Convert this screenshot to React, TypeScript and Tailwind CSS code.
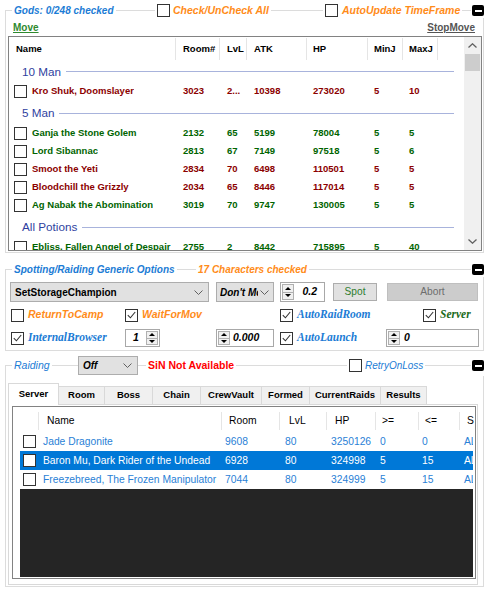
import React from 'react'

type Boss = {
  name: string
  room: string
  lvl: string
  atk: string
  hp: string
  minj: string
  maxj: string
  red?: boolean
}

const gods: { title: string; rows: Boss[] }[] = [
  {
    title: '10 Man',
    rows: [{ name: 'Kro Shuk, Doomslayer', room: '3023', lvl: '2...', atk: '10398', hp: '273020', minj: '5', maxj: '10', red: true }],
  },
  {
    title: '5 Man',
    rows: [
      { name: 'Ganja the Stone Golem', room: '2132', lvl: '65', atk: '5199', hp: '78004', minj: '5', maxj: '5' },
      { name: 'Lord Sibannac', room: '2813', lvl: '67', atk: '7149', hp: '97518', minj: '5', maxj: '6' },
      { name: 'Smoot the Yeti', room: '2834', lvl: '70', atk: '6498', hp: '110501', minj: '5', maxj: '5', red: true },
      { name: 'Bloodchill the Grizzly', room: '2034', lvl: '65', atk: '8446', hp: '117014', minj: '5', maxj: '5', red: true },
      { name: 'Ag Nabak the Abomination', room: '3019', lvl: '70', atk: '9747', hp: '130005', minj: '5', maxj: '5' },
    ],
  },
  {
    title: 'All Potions',
    rows: [{ name: 'Ebliss, Fallen Angel of Despair', room: '2755', lvl: '2', atk: '8442', hp: '715895', minj: '5', maxj: '40' }],
  },
]

const raids = [
  { name: 'Jade Dragonite', room: '9608', lvl: '80', hp: '3250126', ge: '0', le: '0', s: 'AL' },
  { name: 'Baron Mu, Dark Rider of the Undead', room: '6928', lvl: '80', hp: '324998', ge: '5', le: '15', s: 'AL', selected: true },
  { name: 'Freezebreed, The Frozen Manipulator', room: '7044', lvl: '80', hp: '324999', ge: '5', le: '15', s: 'AL' },
]

const tabs = ['Server', 'Room', 'Boss', 'Chain', 'CrewVault', 'Formed', 'CurrentRaids', 'Results']
const tabWidths: Record<string, string> = {
  Server: 'w-[51px]',
  Room: 'w-[47px]',
  Boss: 'w-[49px]',
  Chain: 'w-[49px]',
  CrewVault: 'w-[62px]',
  Formed: 'w-[49px]',
  CurrentRaids: 'w-[72px]',
  Results: 'w-[47px]',
}

function Box({ checked = false }: { checked?: boolean }) {
  return (
    <span className="w-[13px] h-[13px] shrink-0 border border-[#333333] bg-white flex items-center justify-center">
      {checked && (
        <svg width="9" height="8" viewBox="0 0 9 8">
          <path d="M0.8 4.2 L3.4 6.8 L8.2 1" fill="none" stroke="#333333" strokeWidth="1.1" />
        </svg>
      )}
    </span>
  )
}

function Minus() {
  return (
    <span className="w-[12px] h-[11px] bg-black rounded-[2px] flex items-center justify-center">
      <span className="w-[7px] h-[2px] bg-white" />
    </span>
  )
}

function Chevron() {
  return (
    <svg width="9" height="5" viewBox="0 0 9 5" className="shrink-0">
      <path d="M0.5 0.5 L4.5 4.5 L8.5 0.5" fill="none" stroke="#606060" strokeWidth="1" />
    </svg>
  )
}

function Spin() {
  return (
    <span className="w-[12px] shrink-0 flex flex-col border border-[#b0b0b0] bg-[#f0f0f0] m-[1px]">
      <span className="flex-1 flex items-center justify-center border-b border-[#b0b0b0]">
        <svg width="6" height="3" viewBox="0 0 6 3">
          <path d="M0 3 L3 0 L6 3 Z" fill="#000" />
        </svg>
      </span>
      <span className="flex-1 flex items-center justify-center">
        <svg width="6" height="3" viewBox="0 0 6 3">
          <path d="M0 0 L3 3 L6 0 Z" fill="#000" />
        </svg>
      </span>
    </span>
  )
}

function Num({ value, spinLeft = false, className = '', textClass = '' }: { value: string; spinLeft?: boolean; className?: string; textClass?: string }) {
  return (
    <div className={`flex items-stretch border border-[#a8a8a8] bg-white ${className}`}>
      {spinLeft && <Spin />}
      <span className={`flex-1 flex items-center text-[10.5px] font-bold italic ${textClass}`}>{value}</span>
      {!spinLeft && <Spin />}
    </div>
  )
}

function ScrollArrow({ up }: { up?: boolean }) {
  return (
    <div className="h-[17px] flex items-center justify-center">
      <svg width="9" height="5" viewBox="0 0 9 5">
        <path d={up ? 'M0.5 4.5 L4.5 0.8 L8.5 4.5' : 'M0.5 0.5 L4.5 4.2 L8.5 0.5'} fill="none" stroke="#606060" strokeWidth="1.3" />
      </svg>
    </div>
  )
}

export default function App() {
  return (
    <div className="w-[487px] h-[592px] bg-white overflow-hidden font-['Liberation_Sans',Arial,sans-serif] text-black">
      {/* Gods list */}
      <div className="relative mt-[10px] ml-[5px] w-[479px] h-[243px] border border-[#dcdcdc]">
        <div className="absolute left-0 right-0 -top-[8px] h-[15px]">
          <span className="absolute left-[6px] top-0 h-full px-[2px] bg-white flex items-center text-[10px] font-bold italic text-[#1c7cd5]">
            Gods: 0/248 checked
          </span>
          <span className="absolute left-[149px] top-0 h-full px-[2px] bg-white flex items-center gap-[3px]">
            <Box />
            <span className="text-[10.5px] font-bold italic text-[#ff8c1a]">Check/UnCheck All</span>
          </span>
          <span className="absolute left-[317px] top-0 h-full px-[2px] bg-white flex items-center gap-[4px]">
            <Box />
            <span className="text-[10.5px] font-bold italic text-[#ff8c1a]">AutoUpdate TimeFrame</span>
          </span>
          <span className="absolute left-[465px] top-0 h-full pl-[1px] bg-white flex items-center">
            <Minus />
          </span>
        </div>

        <div className="h-[25px] flex justify-between pt-[11px] pl-[7px] pr-[8px] text-[10px] font-bold leading-[12px]">
          <span className="text-[#2f8a2f] underline">Move</span>
          <span className="text-[#555555] underline">StopMove</span>
        </div>

        <div className="ml-[2px] w-[474px] h-[215px] border border-[#828282] flex overflow-hidden">
          <div className="w-[455px] flex flex-col overflow-hidden">
            <div className="h-[24px] shrink-0 flex items-center text-[9.5px] font-bold">
              <span className="w-[167px] h-[22px] flex items-center pl-[7px] border-r border-[#e5e5e5]">Name</span>
              <span className="w-[44px] h-[22px] flex items-center pl-[7px] border-r border-[#e5e5e5]">Room#</span>
              <span className="w-[27px] h-[22px] flex items-center pl-[7px] border-r border-[#e5e5e5]">LvL</span>
              <span className="w-[60px] h-[22px] flex items-center pl-[7px] border-r border-[#e5e5e5]">ATK</span>
              <span className="w-[61px] h-[22px] flex items-center pl-[6px] border-r border-[#e5e5e5]">HP</span>
              <span className="w-[35px] h-[22px] flex items-center pl-[6px] border-r border-[#e5e5e5]">MinJ</span>
              <span className="w-[35px] h-[22px] flex items-center pl-[6px] border-r border-[#e5e5e5]">MaxJ</span>
            </div>

            {gods.map((g, gi) => (
              <div key={g.title}>
                <div className={`${gi === 0 ? 'h-[21px]' : 'h-[24px] pt-[2px]'} flex items-center pl-[13px] pr-[10px]`}>
                  <span className="text-[11.7px] text-[#2f3fa0]">{g.title}</span>
                  <span className="flex-1 ml-[5px] h-px bg-[#a8b3dc]" />
                </div>
                {g.rows.map((r) => (
                  <div
                    key={r.name}
                    className={`h-[18px] flex items-center text-[9.5px] font-bold ${r.red ? 'text-[#8b0000]' : 'text-[#006400]'}`}
                  >
                    <span className="w-[167px] flex items-center gap-[5px] pl-[5px]">
                      <Box />
                      <span className="truncate">{r.name}</span>
                    </span>
                    <span className="w-[44px] pl-[7px]">{r.room}</span>
                    <span className="w-[27px] pl-[7px]">{r.lvl}</span>
                    <span className="w-[60px] pl-[7px]">{r.atk}</span>
                    <span className="w-[61px] pl-[6px]">{r.hp}</span>
                    <span className="w-[35px] pl-[6px]">{r.minj}</span>
                    <span className="w-[35px] pl-[6px]">{r.maxj}</span>
                  </div>
                ))}
              </div>
            ))}
          </div>
          <div className="w-[17px] bg-[#f0f0f0] flex flex-col">
            <ScrollArrow up />
            <div className="h-[17px] mx-[1px] bg-[#cdcdcd]" />
            <div className="flex-1" />
            <ScrollArrow />
          </div>
        </div>
      </div>

      {/* Spotting / Raiding options */}
      <div className="relative mt-[16px] ml-[5px] w-[479px] h-[82px] border border-[#dcdcdc]">
        <div className="absolute left-0 right-0 -top-[8px] h-[15px]">
          <span className="absolute left-[6px] top-0 h-full px-[2px] bg-white flex items-center text-[10px] font-bold italic text-[#1c7cd5]">
            Spotting/Raiding Generic Options
          </span>
          <span className="absolute left-[190px] top-0 h-full px-[2px] bg-white flex items-center text-[10px] font-bold italic text-[#ff8c1a]">
            17 Characters checked
          </span>
          <span className="absolute left-[465px] top-0 h-full pl-[1px] bg-white flex items-center">
            <Minus />
          </span>
        </div>

        <div className="mt-[12px] h-[20px] flex items-stretch">
          <div className="ml-[4px] w-[199px] bg-[#e1e1e1] border border-[#adadad] flex items-center justify-between pl-[4px] pr-[5px]">
            <span className="text-[10px] font-bold">SetStorageChampion</span>
            <Chevron />
          </div>
          <div className="ml-[7px] w-[58px] bg-[#e1e1e1] border border-[#adadad] flex items-center pl-[3px] pr-[4px] gap-[2px]">
            <span className="flex-1 overflow-hidden whitespace-nowrap text-[10px] font-bold italic">Don't Move</span>
            <Chevron />
          </div>
          <Num value="0.2" spinLeft className="ml-[6px] w-[45px]" textClass="justify-end pr-[7px]" />
          <div className="ml-[8px] mt-[1px] w-[44px] h-[18px] bg-[#e1e1e1] border border-[#adadad] flex items-center justify-center text-[10.2px] text-[#2e7d2e]">
            Spot
          </div>
          <div className="ml-[10px] mt-[1px] w-[91px] h-[18px] bg-[#cccccc] border border-[#bfbfbf] flex items-center justify-center text-[10.2px] text-[#6d6d6d]">
            Abort
          </div>
        </div>

        <div className="mt-[3px] h-[20px] flex items-center">
          <span className="ml-[5px] w-[114px] flex items-center gap-[4px]">
            <Box />
            <span className="text-[10.5px] font-bold italic text-[#ff8c1a]">ReturnToCamp</span>
          </span>
          <span className="w-[155px] flex items-center gap-[4px]">
            <Box checked />
            <span className="text-[10.5px] font-bold italic text-[#ff8c1a]">WaitForMov</span>
          </span>
          <span className="w-[143px] flex items-center gap-[4px]">
            <Box checked />
            <span className="font-['Liberation_Serif',serif] text-[11.5px] font-bold italic text-[#1c7cd5]">AutoRaidRoom</span>
          </span>
          <span className="flex items-center gap-[4px]">
            <Box checked />
            <span className="font-['Liberation_Serif',serif] text-[11.5px] font-bold italic text-[#1a6a1a]">Server</span>
          </span>
        </div>

        <div className="mt-[4px] h-[18px] flex items-stretch">
          <span className="ml-[5px] w-[114px] flex items-center gap-[4px]">
            <Box checked />
            <span className="font-['Liberation_Serif',serif] text-[11.5px] font-bold italic text-[#1c7cd5]">InternalBrowser</span>
          </span>
          <Num value="1" className="w-[35px]" textClass="pl-[7px]" />
          <Num value="0.000" spinLeft className="ml-[56px] w-[58px]" textClass="pl-[2px]" />
          <span className="ml-[6px] w-[106px] flex items-center gap-[4px]">
            <Box checked />
            <span className="font-['Liberation_Serif',serif] text-[11.5px] font-bold italic text-[#1c7cd5]">AutoLaunch</span>
          </span>
          <Num value="0" spinLeft className="w-[93px]" textClass="pl-[3px]" />
        </div>
      </div>

      {/* Raiding */}
      <div className="relative mt-[14px] ml-[5px] w-[479px] h-[222px] border border-[#dcdcdc]">
        <div className="absolute left-0 right-0 -top-[11px] h-[21px]">
          <span className="absolute left-[6px] top-0 h-full px-[2px] bg-white flex items-center text-[10.5px] italic text-[#1c7cd5]">
            Raiding
          </span>
          <span className="absolute left-[72px] top-[1px] w-[60px] h-[19px] bg-[#e1e1e1] border border-[#adadad] flex items-center justify-between pl-[4px] pr-[5px]">
            <span className="text-[10px] font-bold italic">Off</span>
            <Chevron />
          </span>
          <span className="absolute left-[140px] top-0 h-full px-[2px] bg-white flex items-center text-[10.5px] font-bold text-[#ff0000]">
            SiN Not Available
          </span>
          <span className="absolute left-[341px] top-0 h-full px-[2px] bg-white flex items-center gap-[3px]">
            <Box />
            <span className="text-[10px] italic text-[#1c7cd5]">RetryOnLoss</span>
          </span>
          <span className="absolute left-[465px] top-0 h-full pl-[1px] bg-white flex items-center">
            <Minus />
          </span>
        </div>

        <div className="mt-[17px] ml-[2px] h-[21px] flex items-end">
          {tabs.map((t, i) => (
            <span
              key={t}
              className={`${tabWidths[t]} flex items-center justify-center text-[9.5px] font-bold border border-b-0 border-[#d9d9d9] ${
                i === 0 ? 'h-[22px] bg-white relative z-10 -mb-[1px]' : 'h-[18px] bg-[#f0f0f0] -ml-[1px]'
              }`}
            >
              {t}
            </span>
          ))}
        </div>

        <div className="ml-[2px] w-[470px] h-[181px] border border-[#d9d9d9] bg-white">
          <div className="ml-[3px] mt-[1px] w-[464px] h-[173px] border border-[#828282] flex flex-col">
            <div className="h-[25px] shrink-0 pt-[2px] flex items-center text-[10.3px]">
              <span className="w-[26px] h-[18px] border-r border-[#e5e5e5]" />
              <span className="w-[183px] h-[18px] flex items-center pl-[8px] border-r border-[#e5e5e5]">Name</span>
              <span className="w-[58px] h-[18px] flex items-center pl-[7px] border-r border-[#e5e5e5]">Room</span>
              <span className="w-[47px] h-[18px] flex items-center pl-[9px] border-r border-[#e5e5e5]">LvL</span>
              <span className="w-[49px] h-[18px] flex items-center pl-[8px] border-r border-[#e5e5e5]">HP</span>
              <span className="w-[43px] h-[18px] flex items-center pl-[6px] border-r border-[#e5e5e5]">&gt;=</span>
              <span className="w-[41px] h-[18px] flex items-center pl-[6px] border-r border-[#e5e5e5]">&lt;=</span>
              <span className="w-[14px] h-[18px] flex items-center pl-[7px] overflow-hidden">S</span>
            </div>
            <div className="ml-[7px] w-[453px] flex-1 mb-[1px] flex flex-col">
              {raids.map((r) => (
                <div
                  key={r.name}
                  className={`h-[19px] shrink-0 flex items-center text-[10.3px] whitespace-nowrap ${
                    r.selected ? 'bg-[#0078d7] text-white' : 'text-[#2a7fd6]'
                  }`}
                >
                  <span className="w-[19px] pl-[3px] flex">
                    <Box />
                  </span>
                  <span className="w-[183px] pl-[4px] overflow-hidden">{r.name}</span>
                  <span className="w-[58px] pl-[3px]">{r.room}</span>
                  <span className="w-[47px] pl-[5px]">{r.lvl}</span>
                  <span className="w-[49px] pl-[4px]">{r.hp}</span>
                  <span className="w-[43px] pl-[4px]">{r.ge}</span>
                  <span className="w-[41px] pl-[3px]">{r.le}</span>
                  <span className="w-[13px] pl-[4px] overflow-hidden">{r.s}</span>
                </div>
              ))}
              <div className="flex-1 bg-[#252525]" />
            </div>
          </div>
        </div>
      </div>
    </div>
  )
}
